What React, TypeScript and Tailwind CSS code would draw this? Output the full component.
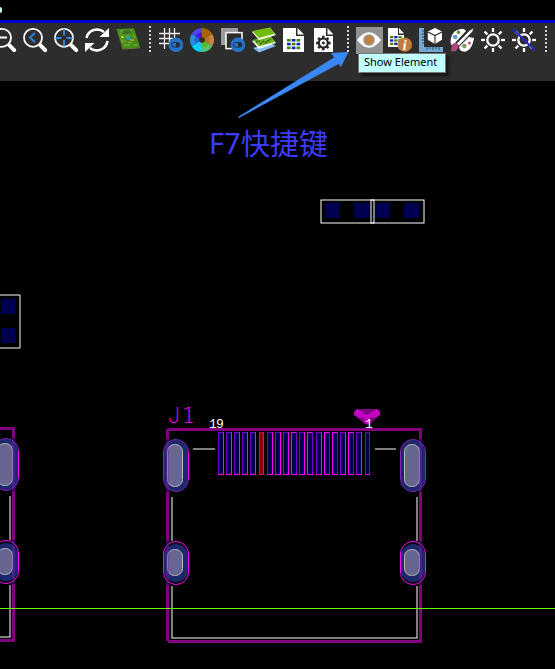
import type { ReactNode } from "react";

function Icon({ children }: { children: ReactNode }) {
  return (
    <svg viewBox="0 0 24 24" className="block size-6 shrink-0 overflow-visible" fill="none">
      {children}
    </svg>
  );
}

function Separator() {
  return (
    <svg viewBox="0 0 5 26" className="-mt-0.5 block h-[26px] w-[5px] shrink-0">
      <path d="M3 0V26" stroke="#d4d4d4" strokeWidth="2" strokeDasharray="2 2" />
    </svg>
  );
}

function Lens({ children }: { children: ReactNode }) {
  return (
    <Icon>
      <circle cx="10" cy="9.8" r="9" stroke="#fff" strokeWidth="1.8" />
      {children}
      <path d="M17.2 17.2L22.2 22.2" stroke="#fff" strokeWidth="4" strokeLinecap="round" />
    </Icon>
  );
}

function ToggleBadge() {
  return (
    <g>
      <circle cx="16.9" cy="16.8" r="7.3" fill="#2474cc" />
      <rect x="12.3" y="14.5" width="8.6" height="4.6" rx="2.3" stroke="#232d3a" strokeWidth="1" />
      <path d="M17 14.5H18.6A2.3 2.3 0 0 1 18.6 19.1H17Z" fill="#232d3a" />
    </g>
  );
}

function Sun() {
  return (
    <g stroke="#fff" strokeWidth="2.3">
      <circle cx="12" cy="12" r="5.7" />
      {[0, 45, 90, 135, 180, 225, 270, 315].map((a) => (
        <path key={a} d="M12 0V4" transform={`rotate(${a} 12 12)`} />
      ))}
    </g>
  );
}

function sector(i: number, count: number, r: number) {
  const a = (i / count) * Math.PI * 2 - Math.PI / 2;
  const b = ((i + 1) / count) * Math.PI * 2 - Math.PI / 2;
  return `M12 12L${12 + r * Math.cos(a)} ${12 + r * Math.sin(a)}A${r} ${r} 0 0 1 ${12 + r * Math.cos(b)} ${12 + r * Math.sin(b)}Z`;
}

function ColorWheel() {
  const outer = ["#a66300", "#ca853d", "#5fc06c", "#00cfff", "#248de5", "#5344ed"];
  const inner = ["#a66300", "#b47028", "#58b52c", "#18c4fa", "#2468d0", "#4a12dc"];
  return (
    <Icon>
      {outer.map((color, i) => <path key={color} fill={color} d={sector(i, 6, 12)} />)}
      {inner.map((color, i) => <path key={color} fill={color} d={sector(i, 6, 7.5)} />)}
      <circle cx="12" cy="12" r="2.8" fill="#2d2d2d" />
    </Icon>
  );
}

function DataCells({ x, y, s = 1 }: { x: number; y: number; s?: number }) {
  return (
    <g transform={`translate(${x} ${y}) scale(${s})`}>
      {[0, 1, 2].map((r) =>
        [0, 1, 2].map((c) => (
          <rect key={`${r}-${c}`} x={c * 5} y={r * 4} width="3.9" height="2.7" fill={(r + c) % 2 ? "#1c1cc4" : "#3d8a0a"} />
        )),
      )}
    </g>
  );
}

function Toolbar() {
  return (
    <div className="-ml-2 flex h-6 w-max items-start gap-[7px]">
      <Lens><path d="M4.5 9.5H15" stroke="#fff" strokeWidth="2" /></Lens>
      <Lens><path d="M12 5L7 9.5L12 14.2" stroke="#2f82dc" strokeWidth="2" /></Lens>
      <Lens><path d="M10 1V7.5M10 12V18.5M1.5 10H7.5M12.5 10H18.5" stroke="#2f82dc" strokeWidth="2" /></Lens>
      <Icon>
        <path d="M1.5 10A10.8 10.8 0 0 1 19 4" stroke="#fff" strokeWidth="2.5" />
        <path d="M24 0V9H14.5Z" fill="#fff" />
        <path d="M22.5 13A10.8 10.8 0 0 1 5 20" stroke="#fff" strokeWidth="2.5" />
        <path d="M0 24V15H9.5Z" fill="#fff" />
      </Icon>
      <Icon>
        <path d="M.4 1L18 .3L24 19.2L6.8 20.8Z" fill="#458f18" />
        <path d="M6.8 20.8L24 19.2V20.2L6.6 21.6L.3 2Z" fill="#70883b" />
        <path d="M4 3H8M12 2.5H16M3 6H6M9 8H14M6 13H10M8 17H14M18 17H21M17 6L19 10M5 10L7 15M12 15L16 14" stroke="#8db548" strokeWidth=".8" />
        <path d="M7 3L14 2L15 5L8 6Z" fill="#3a6a35" />
        <path d="M10 9L14 8.5L15 11.5L11 12Z" fill="#16a1b6" />
        <path d="M14 11H17L18 13H15Z" fill="#d48636" />
        <path d="M5 8H7L8 10H6Z" fill="#ead66a" />
      </Icon>
      <Separator />
      <Icon>
        <path d="M5.5 0V21M10.5 0V17M15.5 0V10M0 5.5H21M0 10.5H14M0 15.5H10" stroke="#eee" strokeWidth="1.3" />
        <ToggleBadge />
      </Icon>
      <ColorWheel />
      <Icon>
        <rect width="17" height="17" fill="#9b9b9f" />
        <rect x="5" y="4.6" width="16" height="16" fill="#2d2d2d" stroke="#fff" strokeWidth="1.5" />
        <ToggleBadge />
      </Icon>
      <Icon>
        <path d="M1 20L18 15L24 18L7 24.5Z" fill="#86bdf2" />
        <path d="M0 13L18 8L24 15L7 21Z" fill="#fff" />
        <path d="M1 12L18 7L23 14L7 18.5Z" fill="#71b51b" />
        <path d="M4 14L8 12.5M8 16L12 13M13 15L19 11" stroke="#24551a" strokeWidth="1.5" strokeDasharray="2 1" />
        <path d="M0 4L18 -.2L24 7L7 12Z" fill="#fff" />
        <path d="M0 3L18 -.5L22.8 5.8L7 10Z" fill="#70bd0d" />
      </Icon>
      <Icon>
        <path d="M0 0H13V8H21V24H0Z" fill="#fff" />
        <path d="M14.5 0V6.5H21Z" fill="#fff" />
        <DataCells x={4} y={11} s={0.95} />
      </Icon>
      <Icon>
        <path d="M0 0H12V8H19V24H0Z" fill="#fff" />
        <path d="M13.5 0V6.5H19.5Z" fill="#fff" />
        <g stroke="#292929" strokeWidth="2.2">
          <circle cx="9.3" cy="15" r="4.5" />
          {[0, 45, 90, 135, 180, 225, 270, 315].map((a) => (
            <path key={a} d="M9.3 7.7V11" strokeWidth="2.6" transform={`rotate(${a} 9.3 15)`} />
          ))}
          <circle cx="9.3" cy="15" r="1.1" fill="#292929" strokeWidth="1" />
        </g>
      </Icon>
      <Separator />
      <div className="-mx-px -mt-px h-[27px] w-[27px] shrink-0 bg-[#929292] pt-px pl-px">
        <Icon>
          <path d="M0 12Q12 -3.5 24 12Q12 27.5 0 12Z" fill="#fff" />
          <circle cx="12" cy="12" r="5.1" fill="#c5803d" stroke="#999" strokeWidth="1.5" />
        </Icon>
      </div>
      <div className="-ml-px">
        <Icon>
          <path d="M0 0H10V7H16V19H0Z" fill="#fff" />
          <path d="M11 0V5.5H16Z" fill="#fff" />
          <DataCells x={2} y={8} s={0.84} />
          <circle cx="16.7" cy="16.7" r="7.3" fill="#c17d3a" />
          <text x="16.6" y="21.5" textAnchor="middle" className="fill-white font-['Liberation_Serif',serif] text-[14px] font-bold italic">i</text>
        </Icon>
      </div>
      <Icon>
        <path d="M0 0H5V19H24V24H0Z" fill="#73a9d2" />
        <path d="M3 3H5M2.5 6H5M3 9H5M2.5 12H5M3 15H5M8 19V22M11 19V21M14 19V22M17 19V21M20 19V22" stroke="#244e70" />
        <path d="M16 0L23 3.6V11.7L16 16L8.8 11.7V3.6Z" fill="#fff" />
        <path d="M9 4L16 7.6L23 4M16 7.5V16" stroke="#2d2d2d" strokeWidth="1.1" />
      </Icon>
      <Icon>
        <path d="M1 17C-1 7 5 0 14 1L16 3L4 16Z" fill="#fff" />
        <path d="M10 22C15 26 22 23 24 10L19 9L9 19Z" fill="#fff" />
        <path d="M20 2L24 0L22.5 3.7L9 18L6.5 15.5Z" fill="#fff" stroke="#2d2d2d" strokeWidth=".7" />
        <path d="M1 23C2 21 .5 17 4.5 15C7 15 9 17 8 20C6.5 24 3 24 1 23Z" fill="#ad477f" />
        <circle cx="8.5" cy="4.2" r="1.7" fill="#52981b" />
        <circle cx="5.2" cy="9" r="2.3" fill="#5aa0d8" />
        <circle cx="14.3" cy="18" r="2.3" fill="#8c9a62" />
        <circle cx="19.4" cy="15" r="1.5" fill="#b75089" />
      </Icon>
      <Icon><Sun /></Icon>
      <Icon><Sun /><path d="M.8 1L23 22.5" stroke="#2424c8" strokeWidth="2" /></Icon>
      <Separator />
    </div>
  );
}

type PadProps = { x: number; y: number; small?: boolean };

function Pad({ x, y, small = false }: PadProps) {
  const height = small ? 44 : 53;
  const inset = small ? 3 : 1;
  const holeTop = small ? 8 : 5;
  const holeHeight = small ? 27 : 43;
  return (
    <g>
      <rect x={x + 1} y={y + inset} width="24" height={height - 2 * inset} rx="12" fill="#1d286c" />
      <rect x={x + 0.5} y={y + 0.5} width="25" height={height - 1} rx="12.5" fill="none" stroke={small ? "#f0f" : "#8424c4"} />
      <rect x={x + 4.5} y={y + holeTop + 0.5} width="15" height={holeHeight - 1} rx="7" fill="#666690" stroke="#b8b8b8" />
    </g>
  );
}

function ConnectorOutline() {
  return (
    <g>
      <g stroke="#fff" fill="none">
        <path d="M193 449H215M375 449H396" />
        <path d="M172 497V541M172 586V638M417 497V541M417 586V638M171.5 638H417.5" />
      </g>
      <Pad x={163} y={439} />
      <Pad x={400} y={439} />
      <Pad x={163} y={541} small />
      <Pad x={400} y={541} small />
      <g stroke="#800080" strokeWidth="3">
        <path d="M168 429.5H422M168 641.5H421" />
        <path d="M167.5 429V439M167.5 492V541M167.5 585V641M420.5 429V439M420.5 492V541M420.5 585V643" />
        <path d="M167.5 439V492M167.5 541V585M420.5 439V492M420.5 541V585" stroke="#7020b0" strokeOpacity=".45" />
      </g>
      <path d="M188.5 452V479M188.5 554V572" stroke="#f0f" />
    </g>
  );
}

const pins = [218, 226, 234, 242, 250, 259, 267, 275, 283, 291, 299, 307, 316, 324, 332, 340, 348, 356, 365];

function Board() {
  return (
    <svg viewBox="0 81 555 588" className="block h-[588px] w-[555px]">
      <g fill="#000050">
        {[325, 354, 375, 404].map((x) => <rect key={x} x={x} y="203" width="15" height="15" />)}
        <rect x="1" y="299" width="15" height="15" />
        <rect x="1" y="328" width="15" height="15" />
      </g>
      <g fill="none" stroke="#fff">
        <rect x="321" y="200" width="53" height="23" />
        <rect x="371" y="200" width="53" height="23" />
        <path d="M0 295H20V348H0" />
      </g>
      <g transform="translate(-407 -1)">
        <ConnectorOutline />
        <path d="M425.5 452V479M425.5 554V572" stroke="#f0f" />
      </g>
      <ConnectorOutline />
      {pins.map((x, i) => {
        const red = i === 5;
        const last = i === pins.length - 1;
        const w = red || last ? 5 : 6;
        const leftBright = [9, 11, 13, 14, 16].includes(i);
        return (
          <g key={x}>
            <rect x={x} y="432" width={w} height="43" fill={red ? "#900000" : "#000050"} />
            <path d={`M${x + 0.5} 475V432.5H${x + w}`} fill="none" stroke={red ? "#e00040" : leftBright ? "#f0f" : "#7800d0"} />
            <path d={`M${x + w - 0.5} 432V475`} stroke={red ? "#ff0060" : leftBright || last ? "#7800d0" : "#f0f"} />
            <path d={`M${x} 474.5H${x + w}`} stroke={red ? "#ff0060" : "#f0f"} />
          </g>
        );
      })}
      <path d="M357 409H378L380 412V415L370 424H365L354 415V412Z" fill="#800080" />
      <path d="M357 409L367 415L377 409L380 412V415L374 418L370 417V422L367 425L364 422V417L360 418L354 415V412Z" fill="#c400c4" />
      <text y="422.5" className="fill-[#ff00ff] text-[21px] font-extralight">
        <tspan x="168" className="font-['Inter','Roboto',sans-serif]">J</tspan>
        <tspan x="182" className="font-['DejaVu_Sans',sans-serif]">1</tspan>
      </text>
      <text y="428" className="fill-white font-['Liberation_Mono',monospace] text-[13px]">
        <tspan x="209">1</tspan>
        <tspan x="216">9</tspan>
      </text>
      <text x="365" y="428" className="fill-white font-['Liberation_Mono',monospace] text-[13px]">1</text>
      <path d="M0 608.5H555" stroke="#66ff00" />
    </svg>
  );
}

export default function App() {
  return (
    <main className="relative flex h-[669px] w-[555px] flex-col overflow-hidden bg-black">
      <div className="flex h-5 items-center">
        <span className="h-1.5 w-0.5 rounded-r bg-[#c5f2ed]" />
      </div>
      <header className="h-[61px] overflow-hidden border-t-[3px] border-[#0000d0] bg-[#2d2d2d] pt-[5px]">
        <Toolbar />
      </header>
      <Board />
      <svg viewBox="0 0 555 669" className="pointer-events-none absolute inset-0 h-[669px] w-[555px]">
        <path d="M348.5 52L331 53L334 57.5L238 117L239 118L338.5 64L341 67Z" fill="#3988f5" />
      </svg>
      <div className="absolute top-[122px] left-[209px] flex text-[29px] leading-[42px] whitespace-nowrap text-[#3c3cff]">
        <span className="w-[32px] font-['Noto_Sans',sans-serif]">F7</span>
        <span className="-mt-px font-['Noto_Sans_CJK_SC',sans-serif]">快捷键</span>
      </div>
      <div className="absolute top-[53px] left-[358px] flex h-5 w-[88px] items-center border border-[#767676] bg-[#c0ffff] pb-[3px] pl-[5px] font-['Noto_Sans',sans-serif] text-[11px] leading-none whitespace-nowrap text-black shadow-[3px_3px_3px_rgba(0,0,0,0.5)]">
        Show Element
      </div>
    </main>
  );
}
